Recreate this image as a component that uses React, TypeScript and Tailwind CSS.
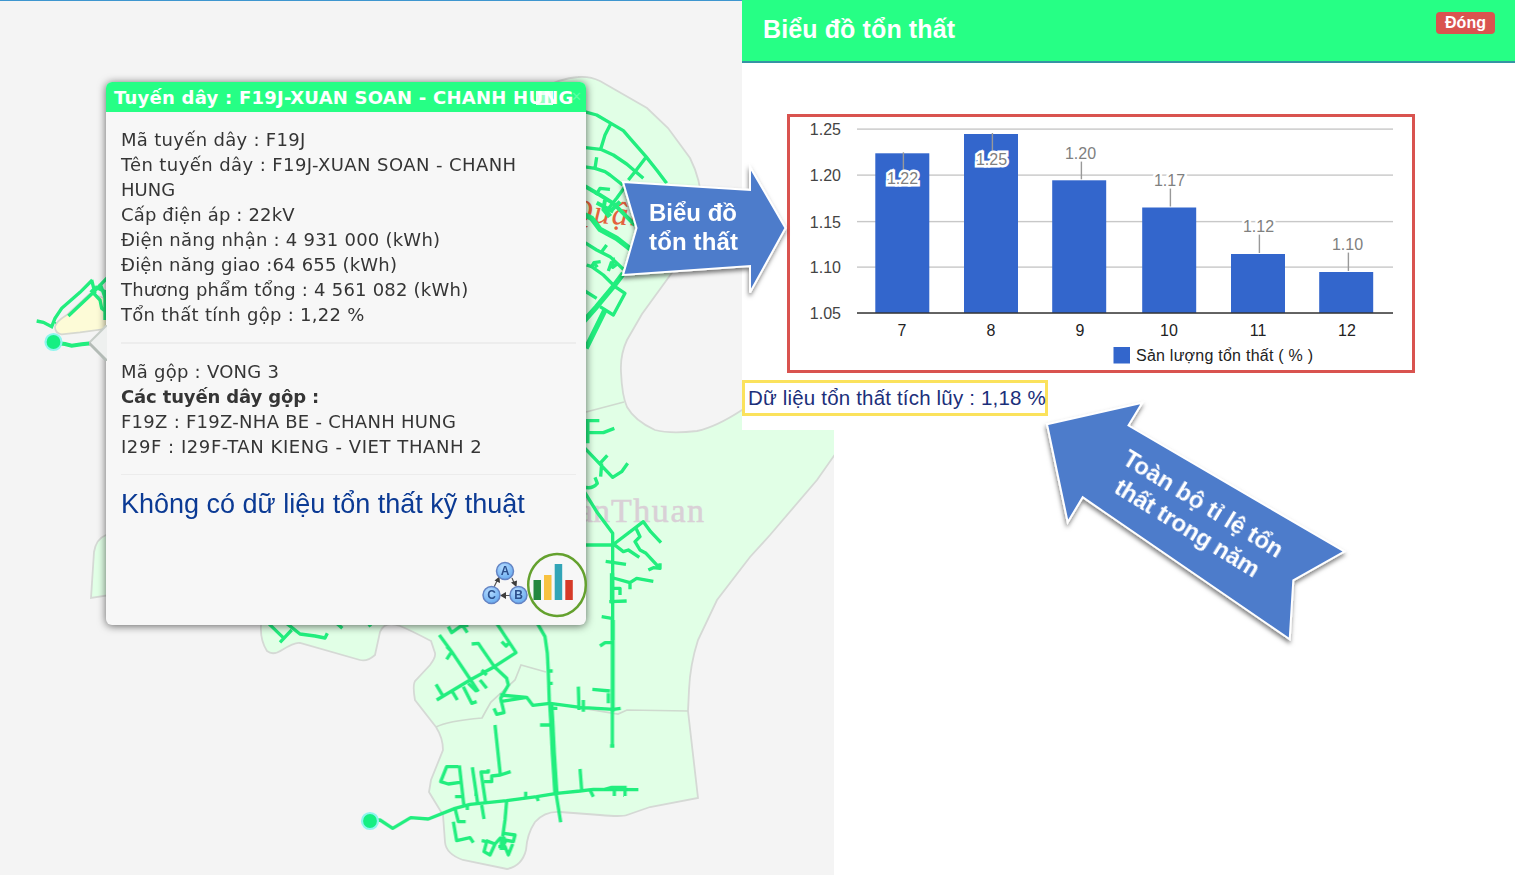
import React from "react";

const LINE = "#20ee7e";

const REGION =
  "M91 598 L94 552 Q96 539 106 535 L300 420 L540 90 Q560 78 578 77 Q590 76 600 81 L647 108 L668 128 L690 158 Q701 180 702 205 Q698 240 671 274 L642 314 L627 340 Q620 355 621 372 Q622 396 627 407 Q635 421 655 430 Q670 434 697 431 Q716 427 742 410 L850 345 V433 L817 480 L770 535 L750 557 L717 600 L698 640 Q690 665 689 690 L688 711 L698 798 L650 807 L627 815 Q622 817 600 815 L560 812 Q545 811 535 822 Q527 834 526 850 Q522 866 507 869 L463 860 Q446 854 445 842 L443 815 L429 792 L431 780 L443 750 Q443 738 436 727 L415 700 Q412 683 416 680 L430 665 Q436 657 435 653 L431 641 Q410 630 400 626 Q385 620 380 632 L375 655 Q367 662 360 660 L300 643 Q295 642 282 650 Q273 656 267 651 Q260 640 261 625 L240 575 Z";

function MapView() {
  return (
    <svg width="834" height="875" viewBox="0 0 834 875" className="block">
      <defs>
        <filter id="rough" filterUnits="userSpaceOnUse" x="0" y="0" width="834" height="875">
          <feTurbulence type="fractalNoise" baseFrequency="0.15" numOctaves="1" seed="4" result="n" />
          <feDisplacementMap in="SourceGraphic" in2="n" scale="1.6" xChannelSelector="R" yChannelSelector="G" />
        </filter>
      </defs>
      <rect width="834" height="875" fill="#f4f4f4" />
      <path d={REGION} fill="#e1ffe6" stroke="#d5d9d5" strokeWidth="1.8" />
      <g fill="none" stroke="#cfdacf" strokeWidth="1.7">
        <path d="M586 412 L624 402 M436 727 Q447 721 482 718 Q488 707 491 702 L515 680 L521 665 L546 672 M550 703 L618 714 L627 710 L688 711" />
      </g>
      <g fontSize="34" fill="#d9d0d6" stroke="#d9d0d6" strokeWidth=".5" className="font-['Liberation_Serif']">
        <text x="610" y="522" textAnchor="end">
          ân
        </text>
        <text x="611" y="522" textLength="93">
          Thuan
        </text>
      </g>
      <text
        x="568"
        y="221"
        fontSize="33"
        fontStyle="italic"
        letterSpacing="1.5"
        fill="#e4623c"
        transform="rotate(4 568 221)"
        className="font-['Liberation_Serif']"
      >
        Quận
      </text>

      <g fill="none" stroke={LINE} strokeWidth="10" strokeLinejoin="round" filter="url(#rough)">
        <g transform="translate(580 60) scale(.33333)">
          <path d="M10 154 L50 165 93 190 130 212 150 235 198 290 230 330 260 370 M93 190 L75 225 62 268 M10 262 L62 268 100 285 140 312 190 355 M198 292 L165 335 145 360" />
          <path d="M10 320 L45 325 50 292 M45 325 L75 335 90 345 128 375 M48 405 L60 385 90 388 M135 380 L110 415 78 455" />
          <path d="M10 376 L60 405 100 430 165 495 M50 428 L100 455 M75 420 L70 450 M120 425 L95 450" strokeWidth="12" />
          <path d="M10 462 L35 475 60 508 110 535 155 570 M70 445 L90 470" strokeWidth="16" />
          <path d="M10 545 L50 570 90 590 130 628 M65 575 L80 555 M20 615 L35 620 42 608 62 605 M42 608 L52 622 M85 633 L95 605 M100 592 L98 622 112 612 M35 620 L70 645 105 680 135 700 100 765 60 740 M10 690 L50 715" />
          <path d="M130 640 L100 680 50 740 10 785 M75 750 L18 865" strokeWidth="16" />
        </g>
        <g transform="translate(560 340) scale(.33333)">
          <path d="M60 242 H118 M60 278 H130 L163 265 M120 370 L142 346 M125 370 L122 410 M70 440 Q95 450 112 430 L105 412 M75 325 L158 412 L185 395 L203 370" />
          <path d="M70 450 L110 515 158 580 158 900 M70 615 H158 L250 545 272 575 303 608 M158 610 L190 635 205 630 238 652 M228 565 L240 590 225 605 240 630 258 640 295 680 M265 690 L280 683 300 685 V670" />
          <path d="M137 664 L198 673 M160 714 L210 728 230 715 280 724 M210 728 V748 M155 745 H180 V765 M148 785 L200 783 M125 830 L155 835" />
          <path d="M82 240 V310 M156 700 V790" strokeWidth="13" />
        </g>
        <g transform="translate(380 620) scale(.33333)">
          <path d="M472 10 L495 50 502 100 505 160 508 250 M500 153 H518 M508 190 H518 M528 520 L542 607 M697 270 V380 M690 378 H703" />
          <path d="M698 0 V275" strokeWidth="12" />
          <path d="M512 250 L515 300 520 400 528 525" strokeWidth="16" />
          <path d="M360 225 L440 232 458 256 510 250 600 262 700 268 722 265 M360 245 L440 232 M595 200 L597 270 M637 208 L690 213 M660 78 L675 68 695 68 M685 220 V250 M480 315 H510 M610 240 V275 M515 265 H532" />
          <path d="M345 315 L361 465 392 455 M361 465 L335 468 V485 H312 M178 45 L215 95 272 180 295 215 M200 118 L215 95 200 80 M275 72 L295 70 305 85 343 140 380 175 385 195 362 235 372 278 350 283 342 265" />
          <path d="M350 10 L408 98 343 140 270 180 170 240 M168 193 L190 230 M217 215 L232 240 M250 200 L275 250 290 245 M300 180 L320 205 M265 190 L290 215 M205 20 L215 38 240 20 265 15 M250 20 L262 38 M365 65 L378 78 388 68 M305 150 L320 165" />
          <path d="M-30 603 L0 600 38 625 92 593 145 597 225 565 270 553 380 542 470 530 530 520 600 513 640 508 775 509" />
          <path d="M225 565 L235 605 H257 M220 605 L230 662 270 653 280 668 M305 555 L312 597 M380 542 L375 600 368 650 M262 555 V570 M470 530 L475 543 M437 515 V535 M600 447 L605 510 M630 510 L640 530 M675 508 L695 502 H740 M703 503 V528 M735 503 V528" />
          <path d="M305 662 L320 665 312 695 330 705 345 672 318 662 M345 672 L360 655 380 668 M372 640 L405 645 400 665 375 660 M355 680 H375 L385 705 398 672" />
          <path d="M368 650 V690" strokeWidth="18" />
          <path d="M235 440 H200 L182 485 205 492 240 487 M238 436 L252 560 M225 530 H245 M277 442 L293 550 M283 523 H293 M325 448 V456 H303 L317 550" />
        </g>
        <g transform="translate(60 500) scale(.33333)">
          <path d="M620 365 L672 415 M660 427 L695 390 M680 370 L720 402 765 408 795 414 802 400 M830 370 L847 385 M925 370 L932 380" />
        </g>
      </g>

      <g transform="translate(20 60) scale(.33333)">
        <path d="M105 800 Q108 785 140 765 L210 700 L270 720 V805 L180 817 L125 823 Q105 820 105 800 Z" fill="#fdfbd7" stroke="#d6d8d0" strokeWidth="5" />
      </g>
      <g filter="url(#rough)">
        <g transform="translate(20 60) scale(.33333)" fill="none" stroke={LINE} strokeWidth="10">
          <path d="M50 783 L70 787 95 800 105 775 125 745 180 697 217 660 M145 768 L215 702 265 650 M215 660 L225 700 M212 690 L240 720 245 745 258 755 M225 680 L265 700 M255 690 V780 M240 670 L265 740" />
          <path d="M101 848 L135 852 155 857 185 853 215 850" strokeWidth="12" />
        </g>
      </g>
      <circle cx="53.500" cy="342" r="8" fill="#15ef82" stroke="#8ff5ee" strokeWidth="2.200" />
      <circle cx="370" cy="821" r="8" fill="#15ef82" stroke="#8ff5ee" strokeWidth="2.200" />
    </svg>
  );
}

function NetworkIcon() {
  const nodes = [
    { x: 23, y: 10, t: "A" },
    { x: 36.5, y: 34, t: "B" },
    { x: 9.5, y: 34, t: "C" },
  ];
  return (
    <svg width="46" height="46" viewBox="0 0 46 46">
      <defs>
        <radialGradient id="node" cx=".4" cy=".3" r=".8">
          <stop offset="0" stopColor="#b5dcff" />
          <stop offset="1" stopColor="#5fa5ee" />
        </radialGradient>
      </defs>
      <g stroke="#555" strokeWidth="1.2" fill="#3d3d3d">
        <path d="M12 26 L16 18 M30 17 L33 24 M28 34.500 H20" />
        <path stroke="none" d="M17.500 15.500 L18 22 L12.500 19.500 Z M34.500 26 L29 21.500 L35 19.500 Z M18 34.500 L24 31 V38 Z" />
      </g>
      {nodes.map((n) => (
        <g key={n.t}>
          <circle cx={n.x} cy={n.y} r="8.500" fill="url(#node)" stroke="#6484c4" strokeWidth="1.500" />
          <text x={n.x} y={n.y + 4.3} textAnchor="middle" fontSize="12" fontWeight="700" fill="#2b4f8c" className="font-['Liberation_Sans']">
            {n.t}
          </text>
        </g>
      ))}
    </svg>
  );
}

function StatsIcon() {
  return (
    <svg width="62" height="66" viewBox="0 0 62 66">
      <ellipse cx="31" cy="33" rx="28.800" ry="31" fill="none" stroke="#64a12e" strokeWidth="2.500" />
      <rect x="7.500" y="28" width="7.500" height="20" fill="#23873f" />
      <rect x="18" y="23" width="7.500" height="25" fill="#f8c23f" />
      <rect x="28.700" y="12" width="7.500" height="36" fill="#32a5b7" />
      <rect x="39.300" y="28" width="7.500" height="20" fill="#d63a28" />
    </svg>
  );
}

function Popup() {
  return (
    <div className="absolute left-[106px] top-[82px] flex h-[543px] w-[480px] flex-col rounded-md bg-[#f7f7f7] font-['Verdana','DejaVu_Sans',sans-serif] text-[#353535] shadow-[0_1px_9px_rgba(0,0,0,0.6)]">
      <svg width="18" height="36" viewBox="0 0 18 36" className="absolute top-[243px] -left-[17px]">
        <path d="M18 0 L0 18 L18 36 Z" fill="#eef0ef" />
        <path d="M18 0 L0 18" stroke="#c6cdc8" strokeWidth="2" />
        <path d="M0 18 L18 36" stroke="#b3bbb6" strokeWidth="3" />
      </svg>
      <div className="relative flex h-[30px] shrink-0 items-center rounded-t-md bg-[#26ff85] pl-2 text-[18px] font-bold whitespace-nowrap text-white">
        <span className="pt-px tracking-[0.240px]">Tuyến dây : F19J-XUAN SOAN - CHANH HUNG</span>
        <span className="absolute top-[9px] left-[430px] h-[14px] w-[17px] border-2 border-t-4 border-white/80 bg-white/50" />
        <span className="absolute top-[9px] left-[465px] h-3 w-2 text-[13px] leading-3 text-white/25">✕</span>
      </div>
      <div className="flex flex-col pt-[15px] pr-2.5 pl-[15px] text-[18px] leading-[25px] whitespace-nowrap">
        <div className="tracking-[0.310px]">Mã tuyến dây : F19J</div>
        <div className="tracking-[0.420px]">Tên tuyến dây : F19J-XUAN SOAN - CHANH</div>
        <div>HUNG</div>
        <div className="tracking-[0.150px]">Cấp điện áp : 22kV</div>
        <div className="tracking-[0.230px]">Điện năng nhận : 4 931 000 (kWh)</div>
        <div className="tracking-[0.190px]">Điện năng giao :64 655 (kWh)</div>
        <div className="tracking-[0.220px]">Thương phẩm tổng : 4 561 082 (kWh)</div>
        <div className="tracking-[0.280px]">Tổn thất tính gộp : 1,22 %</div>
        <div className="mt-[15px] mb-[15px] h-0.5 bg-[#ededed]" />
        <div className="tracking-[0.250px]">Mã gộp : VONG 3</div>
        <div className="font-bold tracking-[-0.140px]">Các tuyến dây gộp :</div>
        <div className="tracking-[0.270px]">F19Z : F19Z-NHA BE - CHANH HUNG</div>
        <div className="tracking-[0.560px]">I29F : I29F-TAN KIENG - VIET THANH 2</div>
        <div className="mt-[15px] h-px bg-[#ececec]" />
        <div className="mt-[11px] font-['Liberation_Sans'] text-[27px] leading-9 text-[#0b3a94]">
          Không có dữ liệu tổn thất kỹ thuật
        </div>
      </div>
      <div className="mt-auto -mr-0.5 mb-[7px] flex items-center justify-end">
        <div className="pb-0.5">
          <NetworkIcon />
        </div>
        <div className="-ml-0.5">
          <StatsIcon />
        </div>
      </div>
    </div>
  );
}

const BARS = [
  { m: "7", x: 875.3, c: 902, top: 153.3, label: "1.22", ly: 184, inside: true },
  { m: "8", x: 964, c: 991, top: 134, label: "1.25", ly: 165, inside: true },
  { m: "9", x: 1052.2, c: 1080, top: 180.3, label: "1.20", ly: 159 },
  { m: "10", x: 1142.2, c: 1169, top: 207.5, label: "1.17", ly: 186 },
  { m: "11", x: 1231, c: 1258, top: 254, label: "1.12", ly: 232 },
  { m: "12", x: 1319.2, c: 1347, top: 272, label: "1.10", ly: 250 },
];
const GRID = [
  { y: 129, t: "1.25" },
  { y: 175, t: "1.20" },
  { y: 221.5, t: "1.15" },
  { y: 267, t: "1.10" },
  { y: 313, t: "1.05" },
];

function Chart() {
  return (
    <svg width="622" height="253" viewBox="790 117 622 253" className="block font-['Liberation_Sans'] text-[16px]">
      {GRID.map((g) => (
        <g key={g.t}>
          <rect x="857" y={g.y - 0.6} width="536" height="1.400" fill="#c8c8c8" />
          <text x="841" y={g.y + 6} textAnchor="end" fill="#444">
            {g.t}
          </text>
        </g>
      ))}
      {BARS.map((b) => (
        <g key={b.m}>
          <rect x={b.x} y={b.top} width="54" height={313 - b.top} fill="#3366cc" />
          <rect x={b.c + 0.7} y={b.inside ? b.top - 1 : b.ly + 2} width="1.400" height={b.inside ? 18 : b.top - b.ly - 3} fill="#999" />
          <text x={b.c + 0.5} y={b.ly} textAnchor="middle" fill="#808080" stroke="#fff" strokeWidth="5" paintOrder="stroke">
            {b.label}
          </text>
          <text x={b.c} y="336" textAnchor="middle" fill="#222">
            {b.m}
          </text>
        </g>
      ))}
      <rect x="857" y="312.300" width="536" height="1.400" fill="#333" />
      <rect x="1113.500" y="347" width="16.500" height="16.500" fill="#3366cc" />
      <text x="1136" y="361" textLength="177" fill="#222">
        Sản lượng tổn thất ( % )
      </text>
    </svg>
  );
}

function Callouts() {
  return (
    <svg width="1515" height="875" viewBox="0 0 1515 875" className="pointer-events-none absolute inset-0 font-['Liberation_Sans'] font-bold">
      <defs>
        <filter id="shade" x="-10%" y="-10%" width="120%" height="125%">
          <feDropShadow dx="-0.5" dy="3" stdDeviation="2" floodColor="#000" floodOpacity=".5" />
        </filter>
      </defs>
      <g fill="#4e7ccb" stroke="#fff" strokeWidth="2" filter="url(#shade)">
        <path d="M623 182 L750 190 V167 L785.500 228 L750 292.500 V266 L623 275 L636.500 228 Z" />
        <path d="M1047 424.300 L1142.300 402.700 L1128.500 425.500 L1344.300 551.500 L1293.300 580.300 L1289.700 639.300 L1082.700 497.300 L1067.700 522.300 Z" />
      </g>
      <g fill="#fff" fontSize="24">
        <text x="649" y="221" textLength="88">
          Biểu đồ
        </text>
        <text x="649" y="250" textLength="89">
          tổn thất
        </text>
        <g transform="translate(1121 463) rotate(31.500)">
          <text x="0" y="0" textLength="183">
            Toàn bộ tỉ lệ tổn
          </text>
          <text x="8" y="29" textLength="165">
            thất trong năm
          </text>
        </g>
      </g>
    </svg>
  );
}

export default function App() {
  return (
    <div className="relative flex h-[875px] w-[1515px] items-start overflow-hidden bg-white font-['Liberation_Sans',sans-serif]">
      <main className="relative w-[834px] shrink-0">
        <MapView />
        <Popup />
        <div className="absolute top-0 left-0 h-px w-full bg-[#3d96cf]" />
      </main>

      <section className="relative -ml-[92px] flex h-[430px] w-[773px] shrink-0 flex-col items-start bg-white">
        <header className="flex h-[63px] w-full shrink-0 items-start justify-between border-b-2 border-[#3793a4] bg-[#26ff85] pt-3 pr-5 pl-[21px] text-white">
          <h1 className="text-[25px] leading-[34px] font-bold tracking-[0.120px]">Biểu đồ tổn thất</h1>
          <button className="h-[22px] w-[59px] rounded-[4px] bg-[#d9534f] text-[16px] leading-[20px] font-bold">Đóng</button>
        </header>
        <div className="mt-[51px] ml-[45px] border-[3px] border-[#d9534f]">
          <Chart />
        </div>
        <div className="mt-[7px] h-9 w-[306px] border-[3px] border-[#fbe25c] pl-[3px] text-[20.500px] leading-[30px] tracking-[0.180px] whitespace-nowrap text-[#1b2f7a]">
          Dữ liệu tổn thất tích lũy : 1,18 %
        </div>
      </section>

      <Callouts />
    </div>
  );
}
